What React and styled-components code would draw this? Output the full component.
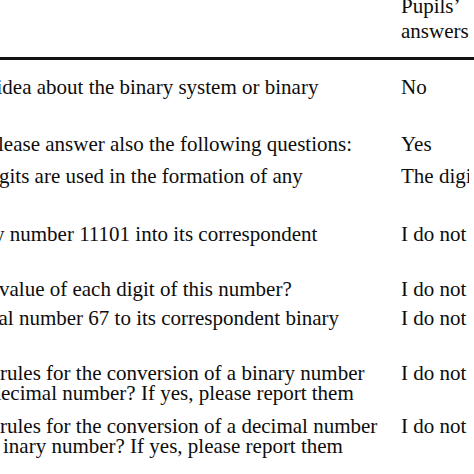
import React from "react";
import styled, { createGlobalStyle } from "styled-components";

const Global = createGlobalStyle`
  html, body {
    margin: 0;
    padding: 0;
    background: #ffffff;
    overflow: hidden;
  }
  body {
    font-family: "Liberation Serif", "Times New Roman", serif;
    color: #0d0d0d;
  }
`;

const Page = styled.div`
  width: 474px;
  height: 474px;
  overflow: hidden;
  background: #ffffff;
`;

const HeaderRow = styled.div`
  display: grid;
  grid-template-columns: 401px 1fr;
  margin-top: -6px;
  font-size: 21px;
  line-height: 25px;
`;

const HeadCell = styled.div`
  white-space: nowrap;
`;

const Rule = styled.div`
  margin-top: 13px;
  height: 3px;
  background: #111111;
`;

const Body = styled.div`
  padding-top: 17px;
  font-size: 21px;
  line-height: 20px;
`;

const Row = styled.div`
  display: grid;
  grid-template-columns: 401px 1fr;
  height: ${(p) => (p.$h ? `${p.$h}px` : "auto")};
`;

const Question = styled.div`
  display: flex;
  flex-direction: column;
  min-width: 0;
`;

const QLine = styled.div`
  white-space: nowrap;
  margin-left: ${(p) => p.$shift || 0}px;
`;

const Answer = styled.div`
  width: 68px;
  white-space: nowrap;
  overflow: hidden;
`;

const rows = [
  { h: 57, lines: [{ t: "idea about the binary system or binary", s: -3.5 }], a: "No" },
  { h: 32, lines: [{ t: "lease answer also the following questions:", s: -2 }], a: "Yes" },
  { h: 58, lines: [{ t: "gits are used in the formation of any", s: -1 }], a: "The digits 0 and 1" },
  { h: 55, lines: [{ t: "y number 11101 into its correspondent", s: -6 }], a: "I do not know" },
  { h: 29, lines: [{ t: "value of each digit of this number?", s: -1 }], a: "I do not know" },
  { h: 55, lines: [{ t: "al number 67 to its correspondent binary", s: -1.5 }], a: "I do not know" },
  {
    h: 53,
    lines: [
      { t: "rules for the conversion of a binary number", s: 0 },
      { t: "decimal number? If yes, please report them", s: -9.5 },
    ],
    a: "I do not know",
  },
  {
    h: 0,
    lines: [
      { t: "rules for the conversion of a decimal number", s: 0 },
      { t: "inary number? If yes, please report them", s: 3 },
    ],
    a: "I do not know",
  },
];

export default function App() {
  return (
    <>
      <Global />
      <Page>
        <HeaderRow>
          <div />
          <HeadCell>
            Pupils’
            <br />
            answers
          </HeadCell>
        </HeaderRow>
        <Rule />
        <Body>
          {rows.map((r, i) => (
            <Row key={i} $h={r.h}>
              <Question>
                {r.lines.map((l, j) => (
                  <QLine key={j} $shift={l.s}>
                    {l.t}
                  </QLine>
                ))}
              </Question>
              <Answer>{r.a}</Answer>
            </Row>
          ))}
        </Body>
      </Page>
    </>
  );
}
